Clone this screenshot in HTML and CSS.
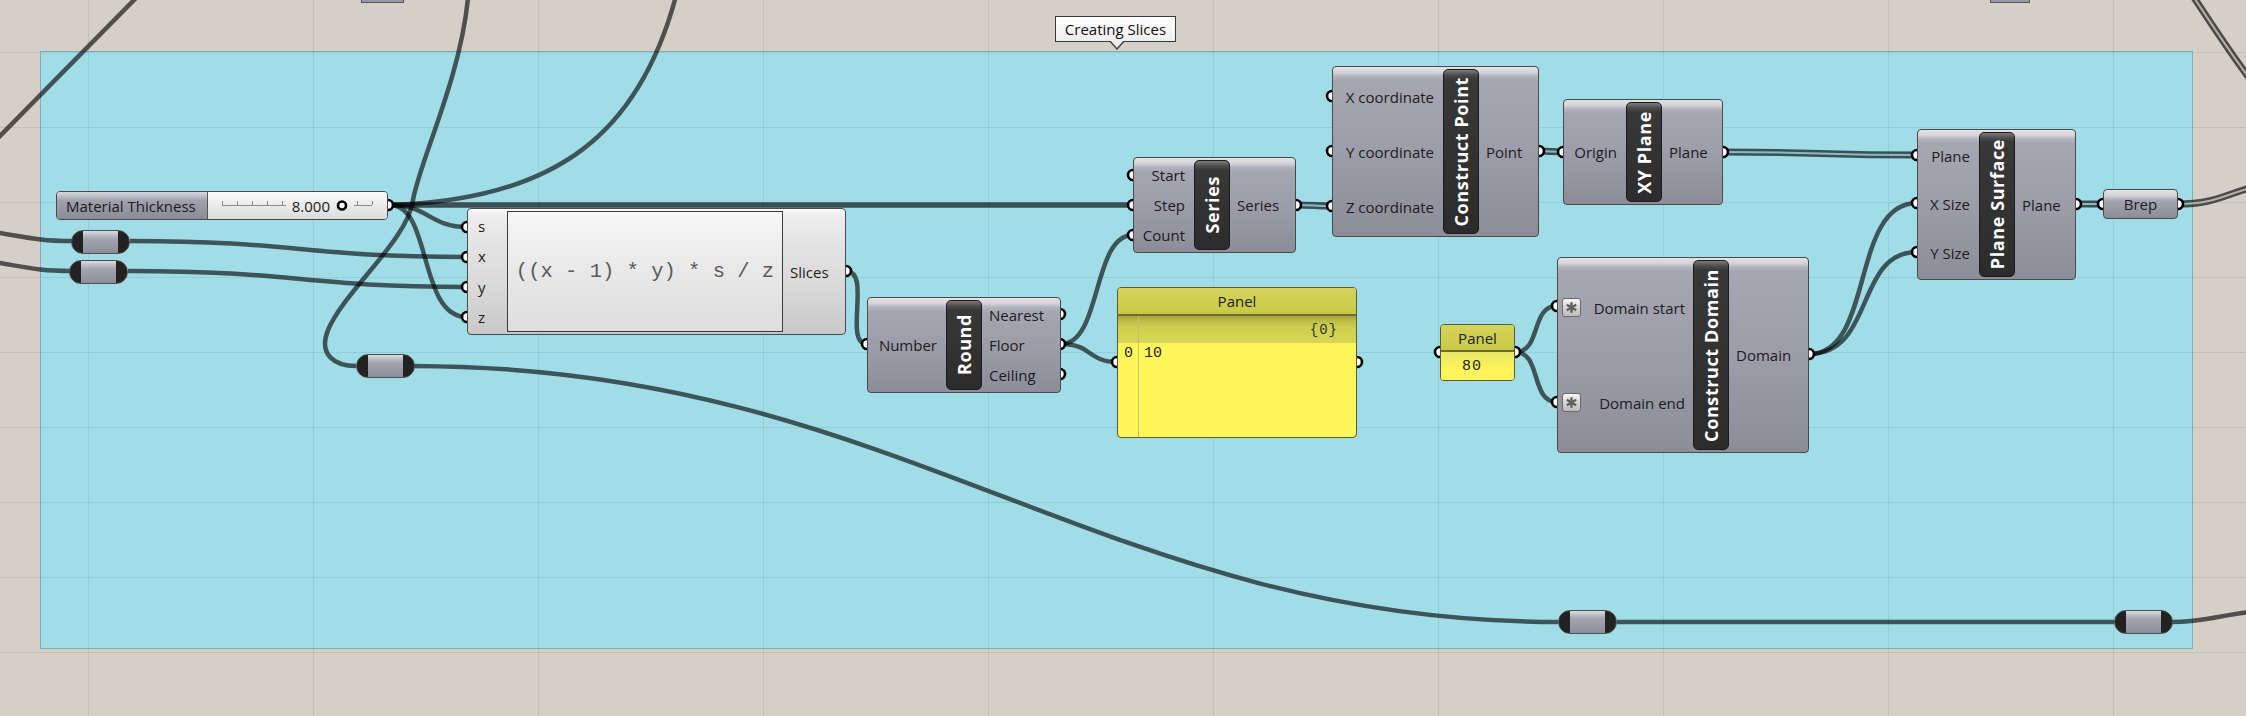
FILE: index.html
```html
<!DOCTYPE html>
<html>
<head>
<meta charset="utf-8">
<title>Creating Slices</title>
<link rel="stylesheet" href="styles.css">
</head>
<body>
<div class="canvas">
  <div class="group"></div>
  <div class="grid"></div>
  <div class="sliver sliver-a"></div>
  <div class="sliver sliver-b"></div>
  <div class="glabel">Creating Slices</div>

  <svg class="wires" width="2246" height="716" viewBox="0 0 2246 716">
    <g class="w">
      <path d="M136,-2 C100,35 40,95 -4,140"/>
      <path d="M468,-2 C460,80 420,160 413,200 C408,240 345,290 328,330 C318,355 335,366 356,366"/>
      <path d="M390,205 C560,200 640,130 676,-4"/>
      <path d="M390,205 C428,205 430,227 467,227"/>
      <path d="M390,205 C432,205 418,317 467,317"/>
      <path d="M-6,232 C30,238 40,241 72,241"/>
      <path d="M-6,262 C30,268 40,271 70,271"/>
      <path d="M130,241 C300,241 300,257 467,257"/>
      <path d="M128,271 C300,271 300,287 467,287"/>
      <path d="M414,366 C900,366 1100,622 1558,622"/>
      <path d="M1617,622 L2114,622"/>
      <path d="M2171,622 C2205,622 2220,615 2250,612"/>
      <path d="M846,271 C872,271 843,344 867,344"/>
      <path d="M1061,344 C1102,344 1092,235 1133,235"/>
      <path d="M1061,344 C1092,344 1088,362 1117,362"/>
      <path d="M1515,352 C1542,352 1530,306 1557,306"/>
      <path d="M1515,352 C1542,352 1530,402 1557,402"/>
      <path d="M1809,354 C1875,354 1850,203 1917,203"/>
      <path d="M1809,354 C1875,354 1855,252 1917,252"/>
    </g>
    <path class="w-thick" d="M390,205 L1133,205"/>
    <g class="wd">
      <path d="M1296,205 C1315,205 1313,206 1332,206"/>
      <path d="M1539,151 L1563,152"/>
      <path d="M1723,152 C1820,152 1820,155 1917,155"/>
      <path d="M2076,204 L2103,204"/>
      <path d="M2178,204 C2212,204 2222,196 2250,188"/>
      <path d="M2193,-4 C2212,25 2232,55 2252,82"/>
    </g>
    <g class="wdi">
      <path d="M1296,205 C1315,205 1313,206 1332,206"/>
      <path d="M1539,151 L1563,152"/>
      <path d="M1723,152 C1820,152 1820,155 1917,155"/>
      <path d="M2076,204 L2103,204"/>
    </g>
    <g class="wdo">
      <path d="M2178,204 C2212,204 2222,196 2250,188"/>
      <path d="M2193,-4 C2212,25 2232,55 2252,82"/>
    </g>
    <g class="grips">
      <circle cx="388" cy="205" r="5"/>
      <circle cx="467" cy="227" r="5"/>
      <circle cx="467" cy="257" r="5"/>
      <circle cx="467" cy="287" r="5"/>
      <circle cx="467" cy="317" r="5"/>
      <circle cx="846" cy="271" r="5"/>
      <circle cx="867" cy="344" r="5"/>
      <circle cx="1060" cy="314" r="5"/>
      <circle cx="1060" cy="344" r="5"/>
      <circle cx="1060" cy="374" r="5"/>
      <circle cx="1133" cy="175" r="5"/>
      <circle cx="1133" cy="205" r="5"/>
      <circle cx="1133" cy="235" r="5"/>
      <circle cx="1296" cy="205" r="5"/>
      <circle cx="1117" cy="362" r="5"/>
      <circle cx="1357" cy="362" r="5"/>
      <circle cx="1332" cy="96" r="5"/>
      <circle cx="1332" cy="151" r="5"/>
      <circle cx="1332" cy="206" r="5"/>
      <circle cx="1539" cy="151" r="5"/>
      <circle cx="1563" cy="152" r="5"/>
      <circle cx="1723" cy="152" r="5"/>
      <circle cx="1440" cy="352" r="5"/>
      <circle cx="1515" cy="352" r="5"/>
      <circle cx="1557" cy="306" r="5"/>
      <circle cx="1557" cy="402" r="5"/>
      <circle cx="1809" cy="354" r="5"/>
      <circle cx="1917" cy="155" r="5"/>
      <circle cx="1917" cy="203" r="5"/>
      <circle cx="1917" cy="252" r="5"/>
      <circle cx="2076" cy="204" r="5"/>
      <circle cx="2103" cy="204" r="5"/>
      <circle cx="2178" cy="204" r="5"/>
    </g>
  </svg>

  <div class="slider">
    <div class="sl-label">Material Thickness</div>
    <div class="sl-track">
      <svg class="sl-ticks" width="178" height="27" viewBox="0 0 178 27">
        <g stroke="#8c8c8c" stroke-width="1">
          <line x1="14" y1="13.5" x2="78" y2="13.5"/>
          <line x1="146" y1="13.5" x2="164" y2="13.5"/>
          <line x1="14.5" y1="9" x2="14.5" y2="13"/>
          <line x1="29.5" y1="9" x2="29.5" y2="13"/>
          <line x1="44.5" y1="9" x2="44.5" y2="13"/>
          <line x1="59.5" y1="9" x2="59.5" y2="13"/>
          <line x1="74.5" y1="9" x2="74.5" y2="13"/>
          <line x1="149.5" y1="9" x2="149.5" y2="13"/>
          <line x1="164.5" y1="9" x2="164.5" y2="13"/>
        </g>
        <circle cx="134" cy="13.5" r="4" fill="#fff" stroke="#000" stroke-width="2.6"/>
      </svg>
      <span class="sl-val">8.000</span>
    </div>
  </div>

  <div class="relay relay-1"></div>
  <div class="relay relay-2"></div>
  <div class="relay relay-3"></div>
  <div class="relay relay-4"></div>
  <div class="relay relay-5"></div>

  <div class="node n-expr">
    <div class="ins"><div>s</div><div>x</div><div>y</div><div>z</div></div>
    <div class="expr-box">((x - 1) * y) * s / z</div>
    <div class="outs"><div>Slices</div></div>
  </div>

  <div class="node n-round">
    <div class="ins"><div>Number</div></div>
    <div class="bar"><span>Round</span></div>
    <div class="outs"><div>Nearest</div><div>Floor</div><div>Ceiling</div></div>
  </div>

  <div class="node n-series">
    <div class="ins"><div>Start</div><div>Step</div><div>Count</div></div>
    <div class="bar"><span>Series</span></div>
    <div class="outs"><div>Series</div></div>
  </div>

  <div class="node n-cpoint">
    <div class="ins"><div>X coordinate</div><div>Y coordinate</div><div>Z coordinate</div></div>
    <div class="bar"><span>Construct Point</span></div>
    <div class="outs"><div>Point</div></div>
  </div>

  <div class="node n-xy">
    <div class="ins"><div>Origin</div></div>
    <div class="bar"><span>XY Plane</span></div>
    <div class="outs"><div>Plane</div></div>
  </div>

  <div class="node n-psurf">
    <div class="ins"><div>Plane</div><div>X Size</div><div>Y Size</div></div>
    <div class="bar"><span>Plane Surface</span></div>
    <div class="outs"><div>Plane</div></div>
  </div>

  <div class="node n-cdom">
    <div class="ins">
      <div><svg class="ast" viewBox="0 0 19 19"><g stroke="#5e5e5e" stroke-width="2.6"><line x1="9.5" y1="3.5" x2="9.5" y2="15.5"/><line x1="4.3" y1="6.5" x2="14.7" y2="12.5"/><line x1="4.3" y1="12.5" x2="14.7" y2="6.5"/></g></svg><span>Domain start</span></div>
      <div><svg class="ast" viewBox="0 0 19 19"><g stroke="#5e5e5e" stroke-width="2.6"><line x1="9.5" y1="3.5" x2="9.5" y2="15.5"/><line x1="4.3" y1="6.5" x2="14.7" y2="12.5"/><line x1="4.3" y1="12.5" x2="14.7" y2="6.5"/></g></svg><span>Domain end</span></div>
    </div>
    <div class="bar"><span>Construct Domain</span></div>
    <div class="outs"><div>Domain</div></div>
  </div>

  <div class="brep">Brep</div>

  <div class="panel panel-big">
    <div class="p-head">Panel</div>
    <div class="p-sub">{0}</div>
    <div class="p-body"><span class="p-idx">0</span><span class="p-val">10</span></div>
  </div>

  <div class="panel panel-small">
    <div class="p-head">Panel</div>
    <div class="p-body">80</div>
  </div>
</div>
</body>
</html>
```

FILE: styles.css
```css
html, body {
  margin: 0;
  padding: 0;
  background: #d4d0c8;
}

.canvas {
  position: relative;
  width: 2246px;
  height: 716px;
  overflow: hidden;
  background: #d4d0c8;
  font-family: "Open Sans", "Noto Sans", sans-serif;
  font-size: 15px;
  color: #1c1c1c;
}

.group {
  position: absolute;
  left: 40px;
  top: 51px;
  width: 2153px;
  height: 598px;
  box-sizing: border-box;
  background: #a1dde7;
  border: 1px solid rgba(60, 90, 95, 0.35);
}

.grid {
  position: absolute;
  inset: 0;
  background-image:
    linear-gradient(to right, rgba(0, 0, 0, 0.075) 1px, transparent 1px),
    linear-gradient(to bottom, rgba(0, 0, 0, 0.075) 1px, transparent 1px);
  background-size: 225px 75px;
  background-position: 88px 52px;
}

.sliver {
  position: absolute;
  top: -3px;
  height: 6px;
  box-sizing: border-box;
  background: #9a9aa4;
  border: 1px solid #555;
}
.sliver-a { left: 361px; width: 43px; }
.sliver-b { left: 1990px; width: 40px; }

.glabel {
  position: absolute;
  left: 1055px;
  top: 16px;
  width: 121px;
  height: 26px;
  box-sizing: border-box;
  border: 1px solid #3a3a3a;
  background: linear-gradient(#ffffff, #eeeeee);
  text-align: center;
  line-height: 24px;
  font-size: 15px;
  color: #111;
}
.glabel::before {
  content: "";
  position: absolute;
  left: 53px;
  top: 24px;
  border-left: 8px solid transparent;
  border-right: 8px solid transparent;
  border-top: 9px solid #3a3a3a;
}
.glabel::after {
  content: "";
  position: absolute;
  left: 54px;
  top: 23px;
  border-left: 7px solid transparent;
  border-right: 7px solid transparent;
  border-top: 8px solid #eeeeee;
}

.wires {
  position: absolute;
  left: 0;
  top: 0;
  z-index: 1;
}
.w path {
  fill: none;
  stroke: rgba(0, 0, 0, 0.62);
  stroke-width: 4.5;
}
.w-thick {
  fill: none;
  stroke: rgba(0, 0, 0, 0.64);
  stroke-width: 5.5;
}
.wd path {
  fill: none;
  stroke: rgba(0, 0, 0, 0.64);
  stroke-width: 7;
}
.wdi path {
  fill: none;
  stroke: rgba(140, 200, 210, 0.9);
  stroke-width: 2;
}
.wdo path {
  fill: none;
  stroke: rgba(190, 188, 182, 0.9);
  stroke-width: 2;
}
.grips circle {
  fill: #fff;
  stroke: #000;
  stroke-width: 2.6;
}

/* slider */
.slider {
  position: absolute;
  z-index: 2;
  left: 56px;
  top: 191px;
  width: 332px;
  height: 29px;
  box-sizing: border-box;
  border: 1px solid #4a4a4a;
  border-radius: 4px;
  overflow: hidden;
  display: flex;
}
.sl-label {
  width: 151px;
  box-sizing: border-box;
  padding-left: 9px;
  display: flex;
  align-items: center;
  border-right: 1px solid #555;
  background: linear-gradient(#d6d6dc 0, #b9b9c3 5px, #a3a3af 8px, #9a9aa6 50%, #8c8c98 100%);
  white-space: nowrap;
}
.sl-track {
  flex: 1;
  position: relative;
  display: flex;
  align-items: center;
  justify-content: flex-end;
  padding-right: 57px;
  background: linear-gradient(#fbfbfb, #ececec 45%, #dcdcdc);
}
.sl-ticks {
  position: absolute;
  left: 0;
  top: 0;
}
.sl-val {
  position: relative;
}

/* relays */
.relay {
  position: absolute;
  z-index: 2;
  width: 59px;
  height: 24px;
  box-sizing: border-box;
  border: 1px solid #4d4d4d;
  border-radius: 12px;
  background:
    linear-gradient(to right, #222 0, #222 11px, transparent 11px, transparent 46px, #222 46px, #222 100%),
    linear-gradient(#dcdce2 0, #bdbdc6 4px, #a4a4b0 8px, #8e8e9a 100%);
}
.relay-1 { left: 71px; top: 230px; }
.relay-2 { left: 69px; top: 260px; }
.relay-3 { left: 356px; top: 354px; }
.relay-4 { left: 1558px; top: 610px; }
.relay-5 { left: 2114px; top: 610px; }

/* components */
.node {
  position: absolute;
  z-index: 2;
  box-sizing: border-box;
  border: 1px solid #4a4a4a;
  border-radius: 4px;
  display: flex;
  padding: 2px 0;
  background: linear-gradient(#e4e4e8 0, #d0d0d6 6px, #b3b3bd 9px, #a6a6b2 14px, #9d9da9 50%, #8d8d99 100%);
  white-space: nowrap;
}
.ins, .outs {
  display: flex;
  flex-direction: column;
}
.ins > div {
  flex: 1;
  display: flex;
  align-items: center;
  justify-content: flex-end;
  padding-right: 9px;
}
.outs {
  flex: 1;
}
.outs > div {
  flex: 1;
  display: flex;
  align-items: center;
  padding-left: 7px;
}
.bar {
  width: 36px;
  box-sizing: border-box;
  border: 1px solid #1b1b1b;
  border-radius: 5px;
  background: linear-gradient(#7c7c7c 0, #4c4c4c 5px, #383838 9px, #2c2c2c 100%);
  display: flex;
  align-items: center;
  justify-content: center;
  color: #fff;
  font-weight: 700;
  font-size: 18px;
  letter-spacing: 0.6px;
}
.bar span {
  writing-mode: vertical-rl;
  transform: rotate(180deg);
  line-height: 1;
}

.n-series { left: 1133px; top: 157px; width: 163px; height: 96px; }
.n-series .ins { width: 60px; }

.n-round { left: 867px; top: 297px; width: 194px; height: 96px; }
.n-round .ins { width: 78px; }

.n-cpoint { left: 1332px; top: 66px; width: 207px; height: 171px; }
.n-cpoint .ins { width: 110px; }

.n-xy { left: 1563px; top: 99px; width: 160px; height: 106px; }
.n-xy .ins { width: 62px; }

.n-psurf { left: 1917px; top: 129px; width: 159px; height: 151px; }
.n-psurf .ins { width: 61px; }

.n-cdom { left: 1557px; top: 257px; width: 252px; height: 196px; }
.n-cdom .ins { width: 135px; }
.n-cdom .ins > div {
  justify-content: space-between;
  padding-left: 4px;
  padding-right: 8px;
}
.ast {
  width: 19px;
  height: 19px;
  box-sizing: border-box;
  border: 1px solid #6a6a6a;
  border-radius: 3px;
  background: linear-gradient(#f6f6f6, #d0d0d0 60%, #bcbcbc);
}

.n-expr {
  left: 467px;
  top: 208px;
  width: 379px;
  height: 127px;
  background: linear-gradient(#fbfbfb 0, #ededed 7px, #e3e3e3 30%, #d6d6d6 70%, #c8c8c8 100%);
}
.n-expr .ins { width: 39px; }
.n-expr .ins > div {
  justify-content: flex-start;
  padding-left: 10px;
  padding-right: 0;
}
.expr-box {
  width: 276px;
  box-sizing: border-box;
  border: 1px solid #3c3c3c;
  background: linear-gradient(#f7f7f7, #e8e8e8 50%, #dedede);
  display: flex;
  align-items: center;
  justify-content: center;
  font-family: "Liberation Mono", monospace;
  font-size: 20.5px;
  color: #5a5a5a;
  white-space: pre;
}

.brep {
  position: absolute;
  z-index: 2;
  left: 2103px;
  top: 189px;
  width: 75px;
  height: 30px;
  box-sizing: border-box;
  border: 1px solid #4a4a4a;
  border-radius: 4px;
  background: linear-gradient(#e4e4e8 0, #d0d0d6 6px, #b3b3bd 9px, #a3a3af 40%, #8d8d99 100%);
  display: flex;
  align-items: center;
  justify-content: center;
}

/* panels */
.panel {
  position: absolute;
  z-index: 2;
  box-sizing: border-box;
  border: 1px solid #5a5a36;
  border-radius: 4px;
  overflow: hidden;
  display: flex;
  flex-direction: column;
  background: #fff75a;
}
.p-head {
  height: 26px;
  flex: none;
  display: flex;
  align-items: center;
  justify-content: center;
  background: linear-gradient(#d4d45a, #c9c948);
  border-bottom: 2px solid #6b6b38;
}
.panel-big {
  left: 1117px;
  top: 287px;
  width: 240px;
  height: 151px;
}
.panel-big::before {
  content: "";
  position: absolute;
  left: 20px;
  top: 28px;
  bottom: 0;
  width: 1px;
  background: #c9c068;
}
.p-sub {
  height: 27px;
  flex: none;
  display: flex;
  align-items: center;
  justify-content: flex-end;
  padding-right: 18px;
  background: linear-gradient(#a3a33a 0, #bdbd46 5px, #d0d051 12px, #d6d656 100%);
  font-family: "Liberation Mono", monospace;
  font-size: 14px;
  letter-spacing: 1px;
  color: #333;
}
.panel-big .p-body {
  display: flex;
  height: 20px;
  align-items: center;
  font-family: "Liberation Mono", monospace;
  font-size: 15px;
  color: #222;
}
.p-idx {
  width: 21px;
  text-align: center;
}
.p-val {
  padding-left: 5px;
}
.panel-small {
  left: 1440px;
  top: 324px;
  width: 75px;
  height: 57px;
}
.panel-small .p-head {
  height: 25px;
}
.panel-small .p-body {
  flex: 1;
  display: flex;
  align-items: center;
  padding-left: 21px;
  background: linear-gradient(#e6e664, #fff55a 60%);
  font-family: "Liberation Mono", monospace;
  font-size: 15px;
  letter-spacing: 1px;
  color: #222;
}
```
